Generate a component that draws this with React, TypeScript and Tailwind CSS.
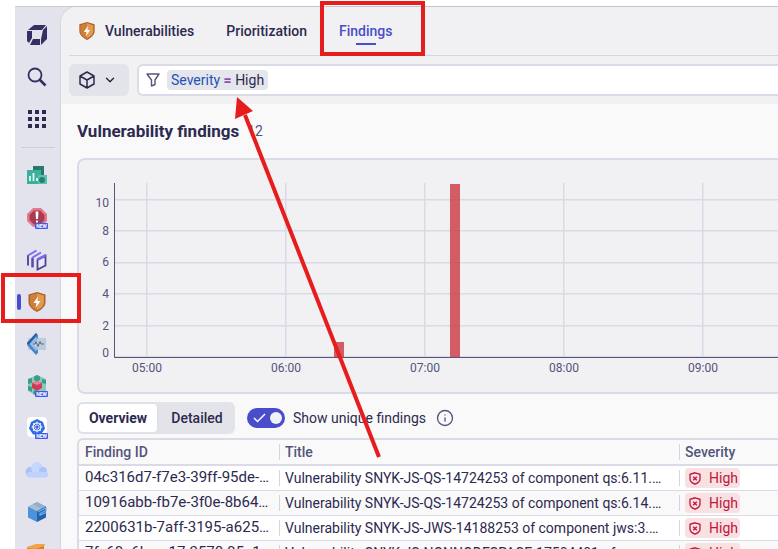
import { ReactNode } from "react";
import { ChevronDown, Info } from "lucide-react";

const NewTag = () => (
  <g>
    <rect x="9" y="16" width="13" height="6" rx="1" fill="#3b5bea" />
    <text x="15.5" y="21" textAnchor="middle" fontSize="5" fontWeight="700" fill="#fff">NEW</text>
  </g>
);

const Icon = ({ children }: { children: ReactNode }) => (
  <svg viewBox="0 0 22 22" className="h-[22px] w-[22px] overflow-visible" aria-hidden="true">{children}</svg>
);

const Shield = ({ className }: { className: string }) => (
  <svg viewBox="0 0 18 20" className={className} aria-hidden="true">
    <path d="M9 0 L17.5 2.5 V10 C17.5 14.5 13.5 17.8 9 20 C4.500 17.800 .5 14.500 .5 10 V2.500 Z" fill="#a9632a" />
    <path d="M9 1.500 L16 3.600 V10 C16 13.800 12.800 16.500 9 18.300 C5.200 16.500 2 13.800 2 10 V3.600 Z" fill="#e39a4d" />
    <path d="M9 1.500 V18.300 C5.200 16.500 2 13.800 2 10 V3.600 Z" fill="#cf7f38" />
    <path d="M10 4.500 L5.500 11 H8.500 L7.500 16 L12.500 9 H9.500 Z" fill="#fff" />
  </svg>
);

const apps: { name: string; icon: ReactNode; active?: boolean }[] = [
  {
    name: "Dashboards",
    icon: (
      <Icon>
        <rect x="7" y="1" width="11" height="9" fill="#27796f" />
        <rect x="1" y="5" width="14" height="14" fill="#3fae9c" />
        <path d="M4 16V11M7.500 16V8M11 16V13" stroke="#d9fff4" strokeWidth="1.800" />
        <rect x="12" y="10" width="9" height="9" fill="#58c4ad" />
        <circle cx="16" cy="15" r="3" fill="#277f73" />
      </Icon>
    ),
  },
  {
    name: "Problems",
    icon: (
      <Icon>
        <path d="M7 1H15L21 7V14L15 20H7L1 14V7Z" fill="#e5788c" />
        <path d="M8 3.500H14L18.500 8V13L14 17.500H8L3.500 13V8Z" fill="#a83c52" />
        <path d="M9.500 4.500H12.500L12 12H10ZM10 13.500H12V15.500H10Z" fill="#fff" />
        <NewTag />
      </Icon>
    ),
  },
  {
    name: "Services",
    icon: (
      <Icon>
        <g fill="none" strokeWidth="2">
          <path d="M2 6V16.500M6.500 8.500V18.500" stroke="#5b4bab" />
          <path d="M2 6.500 10.500 1.500M6.500 8.500 15 3.500M11.500 10.500 20 6" stroke="#8068f2" />
          <path d="M2 16V7M6.500 18V9" stroke="#5b4bab" />
        </g>
        <path d="M11.500 11 19.500 7V16.500L11.500 20.500Z" fill="#e9e9f7" stroke="#4e4590" strokeWidth="1.800" />
        <path d="M11 10.500 20 6" stroke="#8068f2" strokeWidth="2" />
      </Icon>
    ),
  },
  { name: "Vulnerabilities", active: true, icon: <Shield className="h-5 w-[18px]" /> },
  {
    name: "Anomaly detection",
    icon: (
      <Icon>
        <rect x="2" y="5" width="18" height="12" fill="#bccbe0" />
        <path d="M10 0 12 2V5L6 11L12 17V20L10 22L1 12V10Z" fill="#4389cb" />
        <path d="M10 4 11 5.500 6 11 11 16.500 10 18 4 11Z" fill="#a4c4e6" />
        <path d="M10 0 11 1.500 3 11H1V10Z" fill="#2b5d99" />
        <path d="M7 11H9L10 8.500L12 13.500L14 8.500L15 11H18" fill="none" stroke="#54667f" />
      </Icon>
    ),
  },
  {
    name: "Clusters",
    icon: (
      <Icon>
        <path d="M11 0 20 4V16L11 21L2 16V4Z" fill="#8cc8ba" />
        <path d="M11 0 14 1.500V5L11 6.500L8 5V1.500ZM2 4 6 3V8L2 9ZM16 4 20 5V9L16 8ZM2 11 6 12V17L2 15ZM8 15 11 16V21L7 19Z" fill="#3c9c8c" />
        <path d="M11 6 16 8V13L11 16L6 13V8Z" fill="#c93f58" />
        <path d="M11 6 16 8 11 10 6 8Z" fill="#f07f8e" />
        <NewTag />
      </Icon>
    ),
  },
  {
    name: "Kubernetes",
    icon: (
      <Icon>
        <rect x="1" y="0" width="20" height="20" rx="4" fill="#fff" />
        <path d="M11 2 17 5 19 11.500 15 17.500H7L3 11.500L5 5Z" fill="#326ce5" />
        <circle cx="11" cy="10" r="4" fill="none" stroke="#fff" strokeWidth="1.200" />
        <path d="M11 4.500V15.500M5.500 10H16.500M7 6L15 14M15 6L7 14" stroke="#fff" strokeWidth=".8" />
        <circle cx="11" cy="10" r="1.300" fill="#326ce5" />
        <NewTag />
      </Icon>
    ),
  },
  {
    name: "Clouds",
    icon: (
      <Icon>
        <circle cx="4.500" cy="13" r="5" fill="#a9c2f8" />
        <circle cx="11" cy="9" r="6" fill="#c5d7fd" />
        <circle cx="17" cy="12" r="4" fill="#aac4fa" />
        <rect x="1" y="13" width="21" height="5.500" rx="2.700" fill="#bfd2fd" />
      </Icon>
    ),
  },
  {
    name: "Infrastructure",
    icon: (
      <Icon>
        <path d="M11 1 20 5.500 11 10 2 5.500Z" fill="#a9bdd0" />
        <path d="M11 1 20 5.500 15 8 7 3Z" fill="#8fb0cf" />
        <path d="M2 5.500 11 10V21L2 16.500Z" fill="#4b94dc" />
        <path d="M20 5.500 11 10V21L20 16.500Z" fill="#2463aa" />
        <path d="M12 11 20 7V9.500L14 12.500V14L20 11.500" fill="none" stroke="#6fb0f0" strokeWidth="1.200" />
      </Icon>
    ),
  },
  {
    name: "Logs",
    icon: (
      <Icon>
        <path d="M1 4 10 1H19L17 6L9 9H1Z" fill="#f2a544" />
        <path d="M1 5 9 6 18 3V18H2Z" fill="#d98324" />
      </Icon>
    ),
  },
];

const yTicks = [
  { label: "10", line: 39, text: 47 },
  { label: "8", line: 70, text: 75 },
  { label: "6", line: 102, text: 106 },
  { label: "4", line: 133, text: 138 },
  { label: "2", line: 165, text: 170 },
  { label: "0", line: 196, text: 197 },
];
const xTicks = [
  { label: "05:00", x: 68 },
  { label: "06:00", x: 207 },
  { label: "07:00", x: 346 },
  { label: "08:00", x: 485 },
  { label: "09:00", x: 624 },
];

const Chart = () => (
  <svg className="block h-[232px] w-full" role="img" aria-label="Vulnerability findings over time">
    <g fill="#dadae5">
      {yTicks.map((t) => <rect key={t.label} x="36" y={t.line} width="100%" height="1.500" />)}
      {xTicks.map((t) => <rect key={t.label} x={t.x - 1} y="23" width="1.500" height="174" />)}
    </g>
    <g fill="#cd3741" fillOpacity=".8">
      <rect x="255" y="182" width="10" height="15" />
      <rect x="371" y="24" width="10" height="173" />
    </g>
    <path d="M35.500 23V197.500H1400" fill="none" stroke="#57557c" />
    <g fill="#545479" fontSize="12">
      {yTicks.map((t) => <text key={t.label} x="30" y={t.text} textAnchor="end">{t.label}</text>)}
      {xTicks.map((t) => <text key={t.label} x={t.x} y="212" textAnchor="middle">{t.label}</text>)}
    </g>
  </svg>
);

const rows = [
  { id: "04c316d7-f7e3-39ff-95de-…", title: "Vulnerability SNYK-JS-QS-14724253 of component qs:6.11.…" },
  { id: "10916abb-fb7e-3f0e-8b64…", title: "Vulnerability SNYK-JS-QS-14724253 of component qs:6.14.…" },
  { id: "2200631b-7aff-3195-a625…", title: "Vulnerability SNYK-JS-JWS-14188253 of component jws:3.…" },
  { id: "7fc60a6b-ea17-3578-95a1-…", title: "Vulnerability SNYK-JS-NONNODESPACE-17504401 of com…" },
];

const High = () => (
  <span className="flex h-5 w-[55px] items-center gap-2 rounded-sm bg-[#f8e1e1] pl-1 text-[#c4133f]">
    <svg viewBox="0 0 12 13" className="h-[13px] w-3 shrink-0" fill="none" stroke="currentColor" strokeWidth="1.300" aria-hidden="true">
      <path d="M6 .8 11 2.300V7C11 9.500 8.500 11.200 6 12.200C3.500 11.200 1 9.500 1 7V2.300Z" />
      <path d="M4.200 4.700 7.800 8.300M7.800 4.700 4.200 8.300" />
    </svg>
    <span className="leading-5">High</span>
  </span>
);

const Cell = ({ divided, children }: { divided?: boolean; children: ReactNode }) => (
  <div className="flex h-6 items-center overflow-hidden whitespace-nowrap">
    <i className={divided ? "mr-[5px] h-4 w-px shrink-0 bg-[#d5d5e2]" : "mr-[5px] h-4 w-px shrink-0"} />
    {children}
  </div>
);

export default function App() {
  return (
    <div className="relative h-screen overflow-hidden bg-white pt-1.5 pl-[15px] font-[Roboto,sans-serif] text-sm text-[#2c2a4f]">
      <div className="flex h-full border-t border-[#cbcccf] bg-[#e2e3ec]">
        <nav className="flex w-[46px] shrink-0 flex-col pt-[7px]" aria-label="Apps">
          <button className="flex h-[42px] shrink-0 items-center justify-center pr-0.5" aria-label="Home">
            <svg viewBox="0 0 20 20" className="h-5 w-5" aria-hidden="true">
              <path d="M7 0H19L15 5H1Z" fill="#353063" />
              <path d="M0 6H5V13L2 18L0 16Z" fill="#353063" />
              <path d="M20 1V14L14 20V14L16 5Z" fill="#353063" />
              <path d="M6 14H13V20H3Z" fill="#353063" />
            </svg>
          </button>
          <button className="flex h-[42px] shrink-0 items-center justify-center pr-0.5" aria-label="Search">
            <svg viewBox="0 0 20 20" className="h-5 w-5" fill="none" stroke="#353063" aria-hidden="true">
              <circle cx="8" cy="8" r="6.500" strokeWidth="1.800" />
              <path d="M12.500 12.500 18.500 18.500" strokeWidth="2.600" />
            </svg>
          </button>
          <button className="flex h-[42px] shrink-0 items-center justify-center pr-0.5" aria-label="All apps">
            <span className="grid grid-cols-3 gap-[3px]">
              {Array.from({ length: 9 }, (_, i) => <i key={i} className="h-1 w-1 bg-[#2c2a4f]" />)}
            </span>
          </button>
          <hr className="mx-1.5 my-[7px] border-[#cdcedc]" />
          {apps.map((a) => (
            <button key={a.name} aria-label={a.name} className="flex h-[42px] shrink-0 items-center pl-0.5">
              <span className={a.active ? "mr-[5px] h-4 w-1 rounded-full bg-[#494ccb]" : "mr-[5px] h-4 w-1"} />
              <span className="flex w-[22px] justify-center">{a.icon}</span>
            </button>
          ))}
        </nav>
        <main className="min-w-0 flex-1 overflow-hidden rounded-tl-2xl bg-[#f9f9fa] shadow-[0_0_2px_#b8b8cc]">
          <header className="bg-[#f1f1f4] pb-2 pl-2">
            <div className="flex h-[49px] items-center border-b border-[#d5d6de] pl-[9px] font-medium">
              <Shield className="h-[18px] w-[18px]" />
              <nav className="ml-[9px] flex gap-8 leading-5" aria-label="Views">
                <a href="#vulnerabilities">Vulnerabilities</a>
                <a href="#prioritization">Prioritization</a>
                <a href="#findings" className="relative text-[#494ccb]">
                  Findings
                  <span className="absolute top-[22px] left-1/2 h-0.5 w-5 -translate-x-1/2 bg-[#494ccb]" />
                </a>
              </nav>
            </div>
            <div className="mt-2 flex gap-2">
              <button className="flex h-8 w-[60px] shrink-0 items-center justify-center gap-2 rounded-md bg-[#e3e4e9] pr-0.5" aria-label="Segments">
                <svg viewBox="0 0 16 18" className="h-[18px] w-4" fill="none" stroke="currentColor" strokeWidth="1.500" strokeLinejoin="round" aria-hidden="true">
                  <path d="M8 1 15 5V13L8 17L1 13V5ZM1 5 8 9 15 5M8 9V17" />
                </svg>
                <ChevronDown className="h-3.5 w-3.5" strokeWidth={2.5} />
              </button>
              <div className="flex h-8 flex-1 items-center rounded-l-md border-2 border-r-0 border-[#dbdae7] bg-white pl-[7px]">
                <svg viewBox="0 0 14 14" className="h-3.5 w-3.5" fill="none" stroke="#57557c" strokeWidth="1.400" strokeLinejoin="round" aria-hidden="true">
                  <path d="M1 1H13L9 7V11.500L5.500 13V7Z" />
                </svg>
                <button className="ml-[7px] h-5 rounded-sm bg-[#e5e6eb] px-1">
                  <span className="text-[#2352b8]">Severity</span> <span className="font-bold text-[#8f4db5]">=</span> High
                </button>
              </div>
            </div>
          </header>
          <div className="pl-4">
            <div className="flex h-[54px] items-center gap-2">
              <h1 className="text-[17px] font-bold">Vulnerability findings</h1>
              <span className="text-[#545479]">12</span>
            </div>
            <section className="rounded-l-lg border-2 border-r-0 border-[#dbdae7] bg-[#f1f1f4]">
              <Chart />
            </section>
            <div className="mt-2 flex h-8 items-center">
              <div className="flex h-8 rounded-md bg-[#e3e4e9]">
                <button className="w-[82px] rounded-md border-2 border-[#e0e0e9] bg-white font-bold">Overview</button>
                <button className="w-[76px] font-medium">Detailed</button>
              </div>
              <label className="ml-3 flex items-center gap-2">
                <input type="checkbox" defaultChecked className="peer sr-only" />
                <span className="flex h-5 w-[38px] items-center justify-between rounded-full bg-[#494ccb] pr-[3px] pl-1.5">
                  <svg viewBox="0 0 13 10" className="h-2.5 w-[13px]" fill="none" stroke="#fff" strokeWidth="1.500" aria-hidden="true"><path d="M1 5 4.500 8.500 12 1" /></svg>
                  <i className="h-3 w-3 rounded-full bg-[#f1f1fa]" />
                </span>
                Show unique findings
              </label>
              <Info className="ml-2.5 h-[18px] w-[18px] text-[#57557c]" strokeWidth={1.8} />
            </div>
            <div className="mt-1 rounded-tl-md border-t-2 border-l-2 border-[#dbdae7]">
              <table className="w-full table-fixed border-collapse text-left">
                <thead className="text-[#545479]">
                  <tr className="border-b-2 border-[#dbdae7]">
                    <th className="w-[200px] p-0 font-medium"><Cell>Finding ID</Cell></th>
                    <th className="w-[400px] p-0 font-medium"><Cell divided>Title</Cell></th>
                    <th className="p-0 font-medium"><Cell divided>Severity</Cell></th>
                  </tr>
                </thead>
                <tbody>
                  {rows.map((r) => (
                    <tr key={r.id} className="border-b border-[#dbdae7] odd:bg-white">
                      <td className="p-0 text-[15px]"><Cell>{r.id}</Cell></td>
                      <td className="p-0"><Cell divided>{r.title}</Cell></td>
                      <td className="p-0"><Cell divided><High /></Cell></td>
                    </tr>
                  ))}
                </tbody>
              </table>
            </div>
          </div>
        </main>
      </div>
      <div className="pointer-events-none absolute top-px left-80 h-[55px] w-[105px] border-4 border-[#e71d1d]" />
      <div className="pointer-events-none absolute top-[273px] left-px h-[50px] w-20 border-4 border-[#e71d1d]" />
      <svg className="pointer-events-none absolute top-0 left-0 h-full w-full" aria-hidden="true">
        <path d="M379 457 245 115" stroke="#e71d1d" strokeWidth="4" />
        <path d="M237 97 235 119 253 111Z" fill="#e71d1d" />
      </svg>
    </div>
  );
}
